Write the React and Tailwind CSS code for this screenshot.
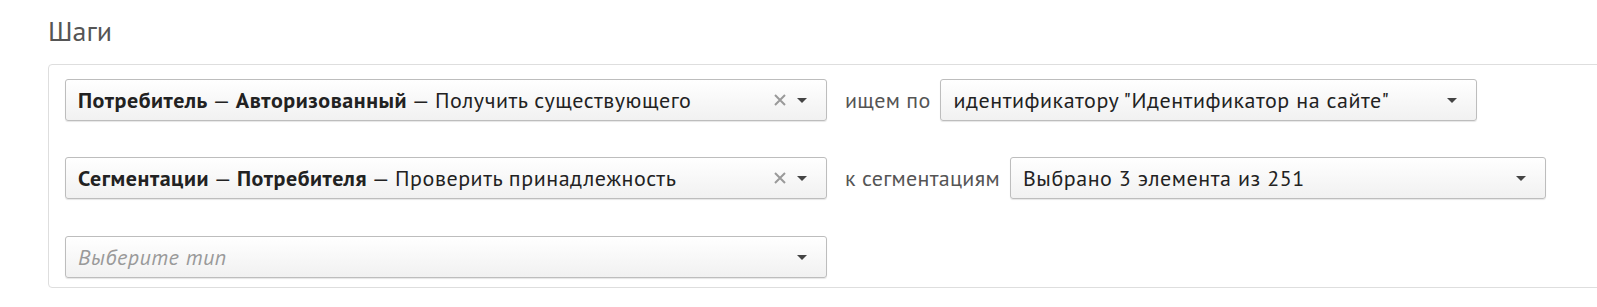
const FONT = { fontFamily: '"PT Sans", "Liberation Sans", Arial, sans-serif' };

const Caret = () => (
  <svg width="10" height="5" viewBox="0 0 10 5" className="shrink-0">
    <path d="M0 0h10L5 5z" fill="#444" />
  </svg>
);

const Clear = () => (
  <svg width="12" height="12" viewBox="0 0 12 12" className="shrink-0">
    <path d="M1 1l10 10M11 1L1 11" stroke="#9a9a9a" strokeWidth="2" />
  </svg>
);

const Select = ({ width, clearable, placeholder, children }) => (
  <div
    className="flex h-[42px] shrink-0 items-center rounded-[3px] border border-[#bdbdbd] bg-gradient-to-b from-white to-[#f1f1f1] pl-[12px] pr-[19px] text-[22px] shadow-[0_1px_1px_rgba(0,0,0,0.1)]"
    style={{ width }}
  >
    <div className={`flex-1 truncate tracking-[0.55px] ${placeholder ? 'italic text-[#9a9a9a]' : 'text-[#222]'}`}>
      {children}
    </div>
    {clearable && (
      <span className="mr-[11px]">
        <Clear />
      </span>
    )}
    <Caret />
  </div>
);

const Label = ({ children }) => (
  <span className="ml-[18px] mr-[10px] text-[22px] tracking-[0.3px] text-[#555]">{children}</span>
);

export default function App() {
  return (
    <div className="w-[1597px] h-[307px] overflow-hidden bg-white" style={FONT}>
      <div className="pl-[48px] pt-[17px]">
        <h2 className="text-[28px] leading-[28px] text-[#555]">Шаги</h2>
      </div>
      <div className="ml-[48px] mr-[-30px] mt-[19px] rounded-[4px] border border-[#dedede] px-[16px] pt-[14px] pb-[9px]">
        <div className="flex items-center">
          <Select width={762} clearable>
            <b>Потребитель</b> — <b>Авторизованный</b> — Получить существующего
          </Select>
          <Label>ищем по</Label>
          <Select width={537}>идентификатору "Идентификатор на сайте"</Select>
        </div>
        <div className="mt-[36px] flex items-center">
          <Select width={762} clearable>
            <b>Сегментации</b> — <b>Потребителя</b> — Проверить принадлежность
          </Select>
          <Label>к сегментациям</Label>
          <Select width={536}>Выбрано 3 элемента из 251</Select>
        </div>
        <div className="mt-[37px] flex items-center">
          <Select width={762} placeholder>
            Выберите тип
          </Select>
        </div>
      </div>
    </div>
  );
}
